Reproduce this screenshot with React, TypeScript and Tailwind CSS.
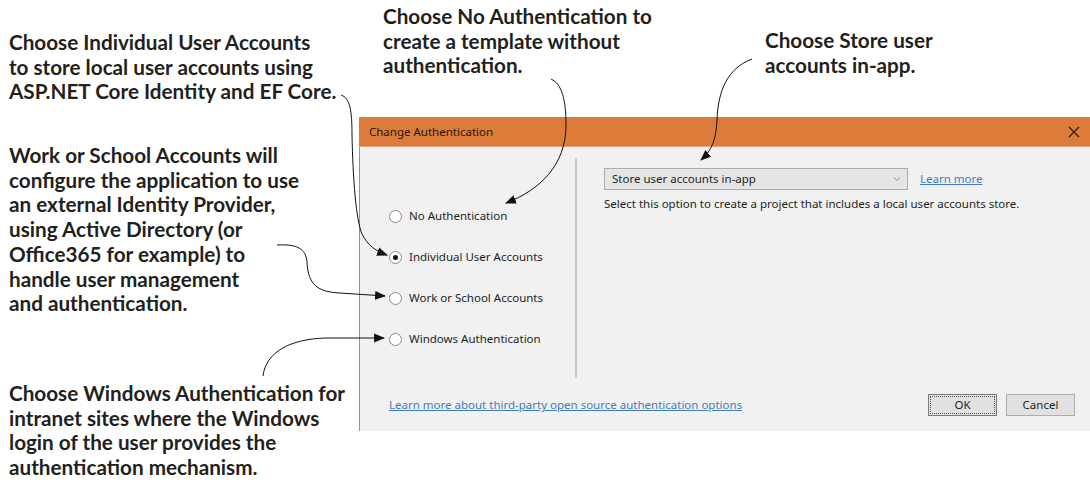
import React from "react";

const annot = "absolute font-bold text-[20.7px] leading-[24.7px] text-[#231f20] whitespace-nowrap";
const ui = "font-['Noto_Sans',sans-serif]";

function Radio({ checked, label }: { checked?: boolean; label: string }) {
  return (
    <div className="flex items-center h-[16px]">
      <div className="w-[13px] h-[13px] rounded-full border border-[#8a8a8a] bg-white flex items-center justify-center">
        {checked && <div className="w-[5px] h-[5px] rounded-full bg-[#111]" />}
      </div>
      <span className="ml-[7px] text-[11.5px] text-[#1e1e1e]">{label}</span>
    </div>
  );
}

export default function App() {
  return (
    <div className="relative w-[1090px] h-[488px] bg-white overflow-hidden font-['Lato',sans-serif]">
      <div className="pt-[117px] pl-[359px]">
        <div className={`w-[731px] h-[314px] flex flex-col ${ui}`}>
          <div className="h-[30px] bg-[#dd7b3b] flex items-center justify-between pl-[10px] pr-[8px] border-b border-[#e9a27a]">
            <span className="text-[11.5px] text-[#2a1608]">Change Authentication</span>
            <svg width="14" height="14" viewBox="0 0 14 14" className="mr-[1px]">
              <path d="M2 2 L12 12 M12 2 L2 12" stroke="#2a1a10" strokeWidth="1.2" />
            </svg>
          </div>
          <div className="flex-1 bg-[#f0f1f0] border-l border-[#dd7b3b] flex flex-col">
            <div className="flex h-[231px] pt-[11px]">
              <div className="w-[215px] pl-[29px] pt-[50px] flex flex-col gap-[25px]">
                <Radio label="No Authentication" />
                <Radio checked label="Individual User Accounts" />
                <Radio label="Work or School Accounts" />
                <Radio label="Windows Authentication" />
              </div>
              <div className="w-[2px] h-[220px] bg-[#c9c9c9]" />
              <div className="pl-[27px] pt-[10px] flex flex-col">
                <div className="flex items-center">
                  <div className="w-[304px] h-[22px] border border-[#adadad] bg-[#e5e5e5] flex items-center justify-between pl-[7px] pr-[6px]">
                    <span className="text-[11.5px] text-[#1e1e1e]">Store user accounts in-app</span>
                    <svg width="8" height="6" viewBox="0 0 8 6">
                      <path d="M1 1.5 L4 4.5 L7 1.5" stroke="#888" strokeWidth="1" fill="none" />
                    </svg>
                  </div>
                  <span className="ml-[12px] text-[11.5px] text-[#3f7cc4] underline">Learn more</span>
                </div>
                <span className="mt-[5px] text-[11.5px] text-[#1e1e1e]">
                  Select this option to create a project that includes a local user accounts store.
                </span>
              </div>
            </div>
            <div className="flex items-center pt-[16px] pl-[29px] pr-[15px]">
              <span className="text-[11.5px] text-[#3f7cc4] underline">
                Learn more about third-party open source authentication options
              </span>
              <div className="ml-auto flex gap-[9px]">
                <div className="w-[69px] h-[22px] border border-[#7a7a7a] bg-[#e1e1e1] flex items-center justify-center p-[1px]">
                  <div className="w-full h-full border border-dotted border-[#555] flex items-center justify-center text-[11.5px] text-[#1e1e1e]">
                    OK
                  </div>
                </div>
                <div className="w-[69px] h-[22px] border border-[#adadad] bg-[#e1e1e1] flex items-center justify-center text-[11.5px] text-[#1e1e1e]">
                  Cancel
                </div>
              </div>
            </div>
          </div>
        </div>
      </div>

      <div className={`${annot} left-[9px] top-[30px]`}>
        Choose Individual User Accounts<br />to store local user accounts using<br />ASP.NET Core Identity and EF Core.
      </div>
      <div className={`${annot} left-[9px] top-[143px]`}>
        Work or School Accounts will<br />configure the application to use<br />an external Identity Provider,<br />using Active Directory (or<br />Office365 for example) to<br />handle user management<br />and authentication.
      </div>
      <div className={`${annot} left-[9px] top-[381px]`}>
        Choose Windows Authentication for<br />intranet sites where the Windows<br />login of the user provides the<br />authentication mechanism.
      </div>
      <div className={`${annot} left-[383px] top-[4px]`}>
        Choose No Authentication to<br />create a template without<br />authentication.
      </div>
      <div className={`${annot} left-[765px] top-[28px]`}>
        Choose Store user<br />accounts in-app.
      </div>

      <svg className="absolute inset-0 pointer-events-none" width="1090" height="488" viewBox="0 0 1090 488">
        <defs>
          <marker id="ah" viewBox="0 0 10 10" refX="9" refY="5" markerWidth="11" markerHeight="11" markerUnits="userSpaceOnUse" orient="auto">
            <path d="M0 1 L10 5 L0 9 Z" fill="#111" />
          </marker>
        </defs>
        <g fill="none" stroke="#111" strokeWidth="1">
          <path d="M341 95 C350 98 352 110 352 135 C353 180 356 220 362 234 C368 246 376 251 387 255" markerEnd="url(#ah)" />
          <path d="M277 245 C296 244 306 248 307 262 C308 285 318 292 340 293 L385 296" markerEnd="url(#ah)" />
          <path d="M263 376 C266 352 290 339 326 338 L384 338" markerEnd="url(#ah)" />
          <path d="M551 79 C562 84 566 100 566 125 C566 165 540 190 506 203" markerEnd="url(#ah)" />
          <path d="M752 59 C728 68 718 90 717 120 C716 140 712 150 701 160" markerEnd="url(#ah)" />
        </g>
      </svg>
    </div>
  );
}
